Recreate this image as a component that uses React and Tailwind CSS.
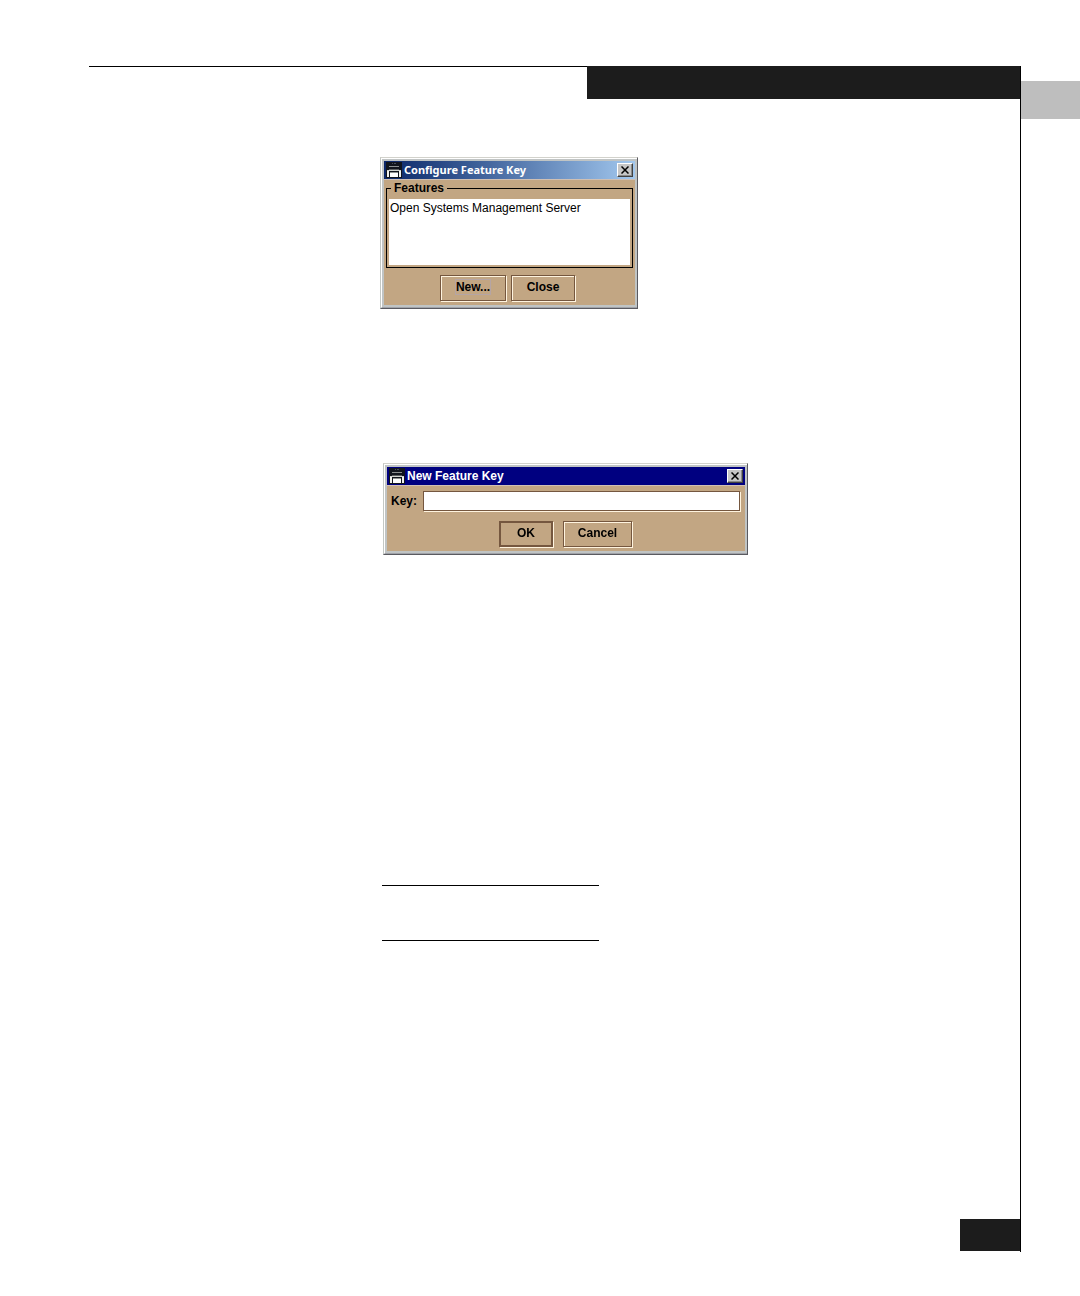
function AppIcon() {
  return (
    <svg width="16" height="16" viewBox="0 0 16 16" shapeRendering="crispEdges" aria-hidden="true" className="shrink-0">
      <rect width="16" height="16" fill="#11151d" />
      <rect x="6" y="1" width="1" height="1" fill="#4a505c" />
      <rect x="8" y="1" width="2" height="1" fill="#4a505c" />
      <rect x="3" y="4" width="10" height="1" fill="#8b8f90" />
      <rect x="3" y="7" width="10" height="1" fill="#5c6061" />
      <rect x="1" y="8" width="14" height="1" fill="#d4d6d2" />
      <rect x="1" y="9" width="2" height="6" fill="#f2f2ee" />
      <rect x="13" y="9" width="2" height="6" fill="#f2f2ee" />
      <rect x="4" y="10" width="8" height="5" fill="#ffffff" />
      <rect x="4" y="10" width="8" height="1" fill="#8e9290" />
    </svg>
  );
}

function CloseButton() {
  return (
    <button
      type="button"
      aria-label="Close window"
      className="ml-auto flex h-3.5 w-4 shrink-0 items-center justify-center border border-t-white border-l-white border-r-[#404040] border-b-[#404040] bg-[#c6c6c6] shadow-[inset_-1px_-1px_0_#8a8a8a]"
    >
      <svg width="8" height="8" viewBox="0 0 8 8" aria-hidden="true">
        <path d="M0.5 0.5L7.5 7.5M7.5 0.5L0.5 7.5" stroke="#000" strokeWidth="1.5" />
      </svg>
    </button>
  );
}

function Dialog({ title, bar, children }) {
  return (
    <section
      aria-label={title}
      className="w-full border border-t-[#d2d2cc] border-l-[#c4c8c4] border-r-[#5a5a60] border-b-[#5a5a60] bg-[#c0c4c4]"
    >
      <div className="border border-r-0 border-t-white border-l-white border-b-[#a0a2a8] p-0.5">
        <header className={`flex h-[18px] items-center gap-0.5 px-0.5 text-white ${bar}`}>
          <AppIcon />
          <h2>{title}</h2>
          <CloseButton />
        </header>
        <div className="border-t border-[#d0c0b4] bg-[#c2a683]">{children}</div>
      </div>
    </section>
  );
}

function PushButton({ children, size }) {
  return (
    <button
      type="button"
      className={`h-[26px] border border-[#75573f] pb-0.5 text-center text-xs font-bold shadow-[inset_1px_1px_0_#fff4df,1px_1px_0_#fff4df] ${size}`}
    >
      {children}
    </button>
  );
}

export default function App() {
  return (
    <div className="flex bg-white pt-[66px] font-['Liberation_Sans',Arial,sans-serif] text-black">
      <main className="ml-[89px] flex flex-1 flex-col border-r border-black pb-px">
        <div className="flex">
          <div className="flex-1 border-t border-black" />
          <div className="h-[33px] w-[433px] bg-[#1c1c1c]" />
        </div>

        <div className="mt-[58px] ml-[291px] w-[258px]">
          <Dialog
            title="Configure Feature Key"
            bar="bg-linear-to-r from-[#0b2668] to-[#a3c8ee] font-['Noto_Sans',sans-serif] text-[11px] font-bold"
          >
            <fieldset className="mx-0.5 mt-0.5 border border-black px-0.5 pt-1 pb-0.5">
              <legend className="ml-0.5 px-[3px] text-xs leading-[13px] font-bold">Features</legend>
              <ul className="h-[66px] bg-white px-px pt-px">
                <li className="text-xs leading-4">Open Systems Management Server</li>
              </ul>
            </fieldset>
            <div className="flex justify-center gap-[5px] pt-[7px] pr-1 pb-1">
              <PushButton size="w-[66px]">
                <span className="outline outline-[#b5a5a5]">New...</span>
              </PushButton>
              <PushButton size="w-16">Close</PushButton>
            </div>
          </Dialog>
        </div>

        <div className="mt-[154px] ml-[294px] w-[365px]">
          <Dialog title="New Feature Key" bar="bg-[#000080] text-xs font-bold">
            <div className="flex items-center pt-[5px] pr-[5px] pl-1">
              <label htmlFor="feature-key" className="w-8 text-xs font-bold">
                Key:
              </label>
              <input
                id="feature-key"
                type="text"
                autoFocus
                className="h-5 min-w-0 flex-1 border border-[#75573f] bg-white px-px text-xs shadow-[1px_1px_0_#fff4df] outline-none"
              />
            </div>
            <div className="flex justify-center gap-2.5 pt-[10px] pr-px pb-1">
              <PushButton size="w-[54px] outline outline-[#75573f] -outline-offset-2">OK</PushButton>
              <PushButton size="w-[69px]">Cancel</PushButton>
            </div>
          </Dialog>
        </div>

        <div className="mt-[330px] ml-[293px] h-14 w-[217px] border-y border-black" />
        <div className="mt-[278px] h-8 w-[60px] self-end bg-[#1c1c1c]" />
      </main>
      <aside className="mt-[15px] h-[38px] w-[59px] bg-[#bebebe]" />
    </div>
  );
}
